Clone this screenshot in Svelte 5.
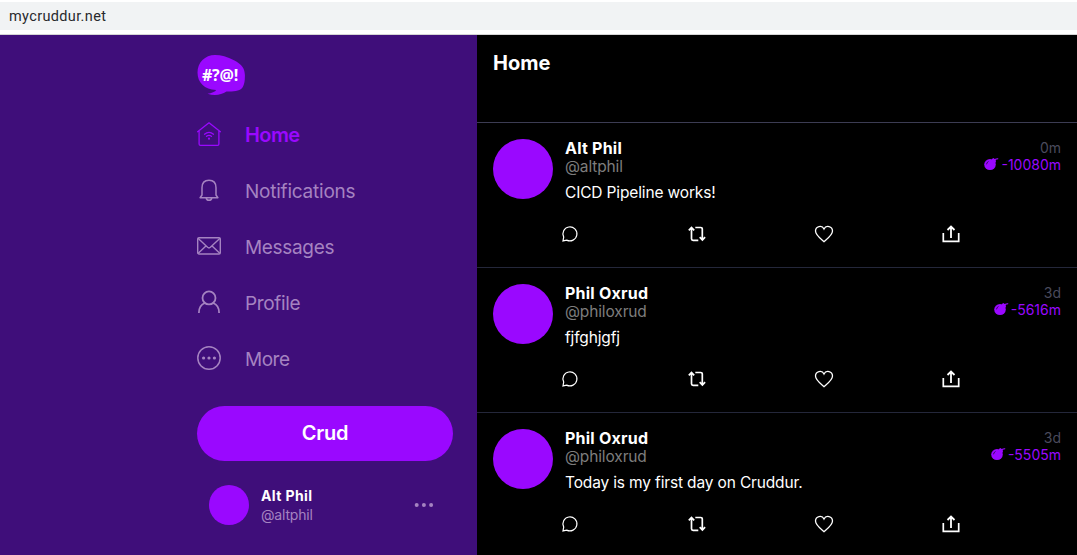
<script>
  const links = [
    { name: 'Home', icon: 'home', active: true, spacing: -0.6 },
    { name: 'Notifications', icon: 'bell', spacing: -0.23 },
    { name: 'Messages', icon: 'mail', spacing: -0.33 },
    { name: 'Profile', icon: 'person', spacing: -0.36 },
    { name: 'More', icon: 'more', spacing: -0.5 }
  ];
  const posts = [
    { name: 'Alt Phil', handle: '@altphil', text: 'CICD Pipeline works!', age: '0m', ttl: '-10080m' },
    { name: 'Phil Oxrud', handle: '@philoxrud', text: 'fjfghjgfj', age: '3d', ttl: '-5616m' },
    { name: 'Phil Oxrud', handle: '@philoxrud', text: 'Today is my first day on Cruddur.', age: '3d', ttl: '-5505m' }
  ];
</script>

<div class="window">
  <header class="address"><span>mycruddur.net</span></header>
  <div class="page">
    <aside>
      <nav>
        <div class="logo">
          <svg width="48" height="40" viewBox="0 0 48 40">
            <path fill="#9a08ff" d="M18 0C8 0 .5 7.500 .5 17.500C.5 27.500 7.500 34.500 19 35C18.500 36.800 14.500 38.300 10.500 38.700C17 40.800 24 40.200 29.500 36.500C38 36.700 43.500 36 45.800 32C47.500 29 48 25 47.900 20C47.700 13.500 45 9.500 37 5.300C30.500 1.800 24 0 18 0Z" />
          </svg>
          <span>#?@!</span>
        </div>
        {#each links as link}
          <div class="link" class:active={link.active}>
            <svg width="24" height="24" viewBox="0 0 24 24" fill="none" stroke="currentColor" stroke-width="1.5">
              {#if link.icon === 'home'}
                <path stroke-width="1.3" stroke-linejoin="round" stroke-linecap="round" d="M.6 9.700L12 .8L23.400 9.700M2.100 8.700V22q0 1.300 1.300 1.300h17.200q1.300 0 1.300-1.300V8.700" />
                <path stroke-width="1.3" stroke-linecap="round" d="M7.500 12.200q4.500-3.800 9 0M9.500 14.300q2.500-2 5 0" />
                <circle cx="12" cy="16.700" r="1.1" fill="currentColor" stroke="none" />
              {:else if link.icon === 'bell'}
                <path stroke-linejoin="round" d="M5 17V9.800C5 5.100 7.500 2.300 12 2.300s7 2.800 7 7.500V17l1.900 2.700H3.100zM9.200 19.900c.2 3.200 5.400 3.200 5.600 0" />
              {:else if link.icon === 'mail'}
                <rect x=".7" y="3.700" width="22.600" height="16.300" rx="1.300" stroke-width="1.400" />
                <path stroke-width="1.400" d="M1 4.300l9.600 9q1.400 1.200 2.800 0l9.600-9M1 19.600l7.900-7.700M23 19.600l-7.900-7.700" />
              {:else if link.icon === 'person'}
                <circle cx="12" cy="7.900" r="6.500" stroke-width="1.8" />
                <path stroke-width="1.8" d="M1.900 23c0-5.400 2.200-8.700 6.200-10M22.100 23c0-5.400-2.200-8.700-6.200-10" />
              {:else}
                <circle cx="12" cy="12" r="11.200" />
                <g fill="currentColor" stroke="none"><circle cx="6.600" cy="12" r="1.600" /><circle cx="12" cy="12" r="1.600" /><circle cx="17.400" cy="12" r="1.600" /></g>
              {/if}
            </svg>
            <span style:letter-spacing="{link.spacing}px">{link.name}</span>
          </div>
        {/each}
        <button>Crud</button>
        <div class="profile">
          <div class="avatar small"></div>
          <div class="who">
            <strong>Alt Phil</strong>
            <span>@altphil</span>
          </div>
          <svg width="20" height="6" viewBox="0 0 20 6" fill="#a583c1"><circle cx="2.700" cy="3" r="2" /><circle cx="9.900" cy="3" r="2" /><circle cx="17.100" cy="3" r="2" /></svg>
        </div>
      </nav>
    </aside>
    <main>
      <div class="heading">Home</div>
      {#each posts as post}
        <article>
          <div class="top">
            <div class="avatar"></div>
            <div class="body">
              <strong>{post.name}</strong>
              <span class="handle">{post.handle}</span>
              <p>{post.text}</p>
            </div>
            <div class="meta">
              <span class="age">{post.age}</span>
              <span class="ttl">
                <svg width="15" height="14" viewBox="0 0 15 14">
                  <ellipse cx="6" cy="7.600" rx="5.800" ry="5.500" fill="#9a08ff" />
                  <path fill="#9a08ff" d="M7.500 2.300l1.900-1.300 1.300.9q1.600-.9 3.600-.7l-.2 1q-1.600 0-2.600.7l.6 1.200-1.200 2.700z" />
                  <path fill="none" stroke="#000" stroke-width=".6" d="M2.500 7.300q.3-2 2-2.800" />
                </svg>{post.ttl}
              </span>
            </div>
          </div>
          <div class="actions">
            <svg width="20" height="20" viewBox="0 0 20 20"><path d="M3 16.900l.7-3.800A7 7 0 1 1 6.700 16.100z" stroke-width="1.200" /></svg>
            <svg width="20" height="20" viewBox="0 0 20 20"><path d="M1.800 6.400L4.500 3.500l2.700 2.900M4.500 4V14.700q0 1.600 1.600 1.600h5.200M8.300 3.500h5.300q1.700 0 1.700 1.600v10.500M12.700 13.200l2.700 2.900 2.700-2.900" stroke-width="1.700" /></svg>
            <svg width="20" height="20" viewBox="0 0 20 20"><path d="M10 17.700C7.300 15.400 1.500 11.200 1.500 7.100c0-5 6.500-6.300 8.500-2.100 2-4.200 8.500-2.900 8.500 2.100 0 4.100-5.800 8.300-8.500 10.600z" stroke-width="1.300" /></svg>
            <svg width="20" height="20" viewBox="0 0 20 20"><path d="M2.300 9v8.300h15.400V9" stroke-width="1.700" /><path d="M10 14V2.800M6.500 6L10 2.500 13.500 6" stroke-width="1.800" /></svg>
          </div>
        </article>
      {/each}
    </main>
  </div>
</div>

<style>
  :global(body) { margin: 0; background: #fff; }
  .window { width: 1077px; height: 555px; overflow: hidden; font-family: Inter, sans-serif; display: flex; flex-direction: column; }
  .address { height: 28px; flex: none; margin-top: 2px; background: #f1f3f4; border-bottom: 4px solid #fff; box-shadow: 0 1px #d5d5d5; font: 14.500px/29px Roboto, sans-serif; color: #28292c; padding-left: 9px; }
  .address span { letter-spacing: .36px; }
  .page { flex: 1; min-height: 0; margin-top: 1px; display: flex; background: #000; }
  aside { width: 477px; flex: none; background: #3f0e7a; display: flex; justify-content: flex-end; }
  nav { width: 256px; padding: 20px 24px 0 0; display: flex; flex-direction: column; }
  .logo { height: 40px; width: 48px; display: grid; margin-bottom: 12px; }
  .logo > * { grid-area: 1 / 1; }
  .logo span { color: #fff; font: bold 16px/40px "Open Sans", sans-serif; text-align: center; letter-spacing: -.2px; z-index: 1; position: relative; left: -1px; }
  .link { height: 56px; display: flex; align-items: center; gap: 24px; color: #a583c1; font-size: 19px; }
  .link svg { flex: none; position: relative; top: -1px; }
  .link.active { color: #9a08ff; font-size: 20px; font-weight: 600; }
  button { border: 0; padding: 0 0 1px; margin: 19px 0 24px; height: 55px; flex: none; border-radius: 28px; background: #9a08ff; color: #fff; font: 600 20px Inter, sans-serif; letter-spacing: -.2px; }
  .profile { display: flex; align-items: center; padding: 0 19px 0 12px; height: 40px; }
  .avatar { width: 60px; height: 60px; flex: none; border-radius: 50%; background: #9a08ff; }
  .small { width: 40px; height: 40px; }
  .who { flex: 1; margin-left: 12px; display: flex; flex-direction: column; font-size: 14px; line-height: 19px; color: #a583c1; }
  .who strong { color: #fff; letter-spacing: .4px; }
  .who span { letter-spacing: -.2px; }
  main { flex: 1; min-width: 0; color: #fff; }
  .heading { height: 87px; box-sizing: content-box; border-bottom: 1px solid #3c3c53; padding-left: 16px; font-size: 20px; line-height: 56px; font-weight: 700; }
  article { height: 144px; border-bottom: 1px solid #24273a; }
  .top { display: flex; padding: 16px 16px 0; height: 68px; }
  .body { flex: 1; margin-left: 12px; display: flex; flex-direction: column; font-size: 15.500px; line-height: 18px; }
  .body strong { font-size: 16px; letter-spacing: .23px; }
  .handle { color: #7d7d7d; letter-spacing: -.13px; padding-top: 1px; }
  p { margin: 8px 0 0; letter-spacing: -.15px; }
  .meta { font-size: 14px; line-height: 17px; display: flex; flex-direction: column; align-items: flex-end; color: #4a4a5c; }
  .ttl { color: #9a08ff; display: flex; align-items: center; gap: 2px; }
  .ttl svg { position: relative; top: -1px; }
  .actions { display: flex; justify-content: space-between; padding: 17px 116px 0 83px; }
  .actions svg { fill: none; stroke: #fff; }
</style>
